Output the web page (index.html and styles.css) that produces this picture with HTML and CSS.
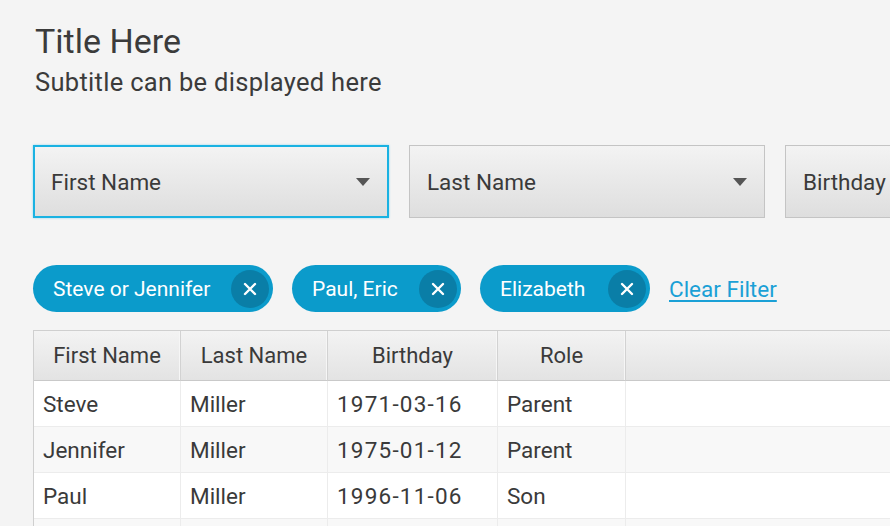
FILE: index.html
```html
<!DOCTYPE html>
<html>
<head>
<meta charset="utf-8">
<link rel="stylesheet" href="styles.css">
</head>
<body>
<div class="page">
  <header class="head">
    <h1 class="title">Title Here</h1>
    <p class="subtitle">Subtitle can be displayed here</p>
  </header>

  <div class="combos">
    <div class="combo focused"><span>First Name</span><i class="arrow"></i></div>
    <div class="combo"><span>Last Name</span><i class="arrow"></i></div>
    <div class="combo"><span>Birthday</span><i class="arrow"></i></div>
  </div>

  <div class="chips">
    <div class="chip chip-1"><span>Steve or Jennifer</span><b class="x">
      <svg viewBox="0 0 16 16" width="16" height="16"><path d="M3 3L13 13M13 3L3 13" stroke="#fff" stroke-width="2.4" stroke-linecap="round"/></svg></b></div>
    <div class="chip chip-2"><span>Paul, Eric</span><b class="x">
      <svg viewBox="0 0 16 16" width="16" height="16"><path d="M3 3L13 13M13 3L3 13" stroke="#fff" stroke-width="2.4" stroke-linecap="round"/></svg></b></div>
    <div class="chip chip-3"><span>Elizabeth</span><b class="x">
      <svg viewBox="0 0 16 16" width="16" height="16"><path d="M3 3L13 13M13 3L3 13" stroke="#fff" stroke-width="2.4" stroke-linecap="round"/></svg></b></div>
    <a class="clear" href="#">Clear Filter</a>
  </div>

  <div class="table">
    <div class="th">First Name</div>
    <div class="th">Last Name</div>
    <div class="th">Birthday</div>
    <div class="th">Role</div>
    <div class="th filler"></div>

    <div class="td">Steve</div><div class="td">Miller</div><div class="td num">1971-03-16</div><div class="td">Parent</div><div class="td"></div>
    <div class="td odd">Jennifer</div><div class="td odd">Miller</div><div class="td odd num">1975-01-12</div><div class="td odd">Parent</div><div class="td odd"></div>
    <div class="td">Paul</div><div class="td">Miller</div><div class="td num">1996-11-06</div><div class="td">Son</div><div class="td"></div>
    <div class="td odd"></div><div class="td odd"></div><div class="td odd"></div><div class="td odd"></div><div class="td odd"></div>
  </div>
</div>
</body>
</html>
```

FILE: styles.css
```css
html, body {
  margin: 0;
  padding: 0;
  background: #f4f4f4;
  overflow: hidden;
  height: 526px;
}

.page {
  font-family: Roboto, "Noto Sans", sans-serif;
  color: #3b3b3b;
  padding: 20px 0 0 33px;
  width: 1100px;
}

.head {
  padding-left: 2px;
}

.title {
  margin: 0;
  font-size: 34px;
  font-weight: 400;
  line-height: 42px;
}

.subtitle {
  margin: 0;
  font-size: 25.5px;
  line-height: 40px;
  letter-spacing: 0.3px;
}

.combos {
  display: flex;
  gap: 20px;
  margin-top: 43px;
}

.combo {
  box-sizing: border-box;
  width: 356px;
  height: 73px;
  border: 1px solid #c4c4c4;
  background: linear-gradient(#f3f3f3, #dedede);
  display: flex;
  align-items: center;
  justify-content: space-between;
  padding: 0 17px 0 17px;
  font-size: 22.5px;
  color: #3a3a3a;
  flex: none;
}

.combo.focused {
  border: 2px solid #1ab2e2;
  box-shadow: 0 0 2px #8fd6ee;
  padding-left: 16px;
}

.arrow {
  width: 0;
  height: 0;
  border-left: 7.5px solid transparent;
  border-right: 7.5px solid transparent;
  border-top: 8px solid #555;
}

.chips {
  display: flex;
  align-items: center;
  gap: 19px;
  margin-top: 47px;
  height: 47px;
}

.chip {
  box-sizing: border-box;
  height: 47px;
  border-radius: 24px;
  background: #0b9bcb;
  color: #fff;
  display: flex;
  align-items: center;
  justify-content: space-between;
  padding: 0 4px 0 20px;
  font-size: 21px;
}

.chip-1 { width: 240px; }
.chip-2 { width: 169px; }
.chip-3 { width: 170px; }

.x {
  width: 38px;
  height: 38px;
  border-radius: 50%;
  background: #0a7ea7;
  display: flex;
  align-items: center;
  justify-content: center;
}

.clear {
  color: #1aa0d6;
  font-size: 22.5px;
  text-decoration: underline;
  text-underline-offset: 3px;
}

.table {
  display: grid;
  grid-template-columns: 147px 147px 170px 128px 1fr;
  margin-top: 18px;
  border-top: 1px solid #cfcfcf;
  border-left: 1px solid #cfcfcf;
  background: #fff;
}

.th {
  box-sizing: border-box;
  height: 50px;
  background: linear-gradient(#f3f3f3, #e3e3e3);
  border-right: 1px solid #d2d2d2;
  border-bottom: 1px solid #c9c9c9;
  box-shadow: inset -1px 0 0 #f6f6f6;
  display: flex;
  align-items: center;
  justify-content: center;
  font-size: 22px;
  color: #3a3a3a;
}

.td {
  box-sizing: border-box;
  height: 46px;
  border-right: 1px solid #ececec;
  border-bottom: 1px solid #ececec;
  display: flex;
  align-items: center;
  padding-left: 9px;
  font-size: 22.5px;
  color: #3a3a3a;
  background: #fff;
}

.td.num {
  letter-spacing: 1.2px;
}

.td.odd {
  background: #f8f8f8;
}
```
